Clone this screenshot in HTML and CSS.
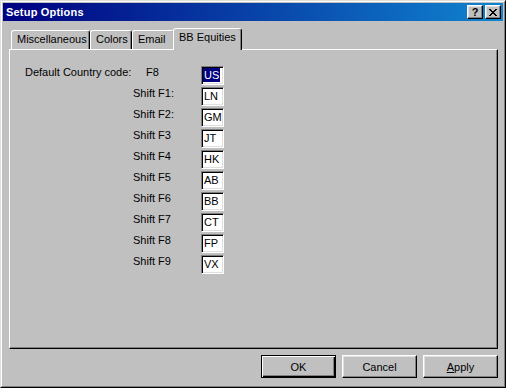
FILE: index.html
```html
<!DOCTYPE html>
<html lang="en">
<head>
    <meta charset="UTF-8">
    <meta name="viewport" content="width=device-width, initial-scale=1.0">
    <title>Setup Options</title>
    <link rel="stylesheet" href="styles.css">
</head>
<body>
    <div class="window">
        <div class="frame">
            <div class="titlebar">
                <span class="title">Setup Options</span>
                <div class="caption-btns">
                    <div class="cap-btn">?</div>
                    <div class="cap-btn">
                        <svg width="8" height="7" viewBox="0 0 8 7">
                            <path d="M0 0h2v1h1v1h2V1h1V0h2v1H7v1H6v1H5v1h1v1h1v1h1v1H6V6H5V5H3v1H2v1H0V6h1V5h1V4h1V3H2V2H1V1H0z" fill="#000"/>
                        </svg>
                    </div>
                </div>
            </div>

            <div class="dialog">
                <div class="tabs">
                    <div class="tab tab-misc">Miscellaneous</div>
                    <div class="tab tab-colors">Colors</div>
                    <div class="tab tab-email">Email</div>
                    <div class="tab tab-bb active">BB Equities</div>
                </div>

                <div class="panel">
                    <div class="fields">
                        <span class="label">Default Country code:</span>
                        <span class="key key-default">F8</span>
                        <span class="code selected"><span>US</span></span>

                        <span></span><span class="key">Shift F1:</span><span class="code"><span>LN</span></span>
                        <span></span><span class="key">Shift F2:</span><span class="code"><span>GM</span></span>
                        <span></span><span class="key">Shift F3</span><span class="code"><span>JT</span></span>
                        <span></span><span class="key">Shift F4</span><span class="code"><span>HK</span></span>
                        <span></span><span class="key">Shift F5</span><span class="code"><span>AB</span></span>
                        <span></span><span class="key">Shift F6</span><span class="code"><span>BB</span></span>
                        <span></span><span class="key">Shift F7</span><span class="code"><span>CT</span></span>
                        <span></span><span class="key">Shift F8</span><span class="code"><span>FP</span></span>
                        <span></span><span class="key">Shift F9</span><span class="code"><span>VX</span></span>
                    </div>
                </div>

                <div class="actions">
                    <button class="btn btn-default">OK</button>
                    <button class="btn">Cancel</button>
                    <button class="btn"><u>A</u>pply</button>
                </div>
            </div>
        </div>
    </div>
</body>
</html>
```

FILE: styles.css
```css
* {
    margin: 0;
    padding: 0;
    box-sizing: border-box;
}
body {
    font-family: "Liberation Sans", Arial, sans-serif;
    font-size: 11px;
    color: #000;
    background: #c0c0c0;
}
.window {
    width: 506px;
    height: 388px;
    background: #c0c0c0;
    border: 1px solid;
    border-color: #dfdfdf #000 #000 #dfdfdf;
}
.frame {
    height: 100%;
    padding: 1px;
    border: 1px solid;
    border-color: #fff #808080 #808080 #fff;
    display: flex;
    flex-direction: column;
}

/* title bar */
.titlebar {
    height: 18px;
    padding: 0 2px 0 3px;
    background: linear-gradient(to right, #000080, #1084d0);
    display: flex;
    align-items: center;
    justify-content: space-between;
}
.title {
    color: #fff;
    font-weight: bold;
    font-size: 11px;
    letter-spacing: 0.2px;
}
.caption-btns {
    display: flex;
    gap: 2px;
}
.cap-btn {
    width: 16px;
    height: 14px;
    background: #c0c0c0;
    border: 1px solid;
    border-color: #fff #000 #000 #fff;
    box-shadow: inset -1px -1px #808080, inset 1px 1px #dfdfdf;
    display: flex;
    align-items: center;
    justify-content: center;
    font-weight: bold;
    font-size: 11px;
    line-height: 11px;
}

/* body of dialog */
.dialog {
    flex: 1;
    padding: 7px 5px 0 6px;
    display: flex;
    flex-direction: column;
}
.tabs {
    height: 21px;
    padding-left: 2px;
    display: flex;
    align-items: flex-end;
}
.tab {
    height: 19px;
    padding: 2px 0 0 5px;
    line-height: 13px;
    border: 1px solid;
    border-bottom: none;
    border-color: #fff #000 transparent #fff;
    border-radius: 3px 3px 0 0;
    box-shadow: inset -1px 0 #808080;
    white-space: nowrap;
}
.tab-misc { width: 79px; }
.tab-colors { width: 42px; }
.tab-email { width: 43px; }
.tab-bb { width: 69px; }
.tab.active {
    height: 22px;
    margin: 0 -2px -1px -2px;
    position: relative;
    z-index: 1;
    background: #c0c0c0;
}

.panel {
    height: 300px;
    border: 1px solid;
    border-color: #fff #000 #000 #fff;
    box-shadow: inset -1px -1px #808080;
}
.fields {
    padding: 16px 0 0 15px;
    display: grid;
    grid-template-columns: 108px 68px 23px;
    grid-auto-rows: 19px;
    row-gap: 2px;
}
.label,
.key {
    line-height: 12px;
    align-self: start;
    white-space: nowrap;
}
.key-default {
    padding-left: 13px;
}
.code {
    width: 23px;
    height: 19px;
    background: #fff;
    border: 1px solid;
    border-color: #808080 #fff #fff #808080;
    box-shadow: inset 1px 1px #000, inset -1px -1px #dfdfdf;
    padding: 1px 0 0 1px;
    line-height: 15px;
}
.code span {
    display: inline-block;
    padding: 0 1px;
    line-height: 14px;
}
.code.selected span {
    background: #000080;
    color: #fff;
}

/* buttons */
.actions {
    margin-top: 6px;
    display: flex;
    justify-content: flex-end;
    gap: 6px;
}
.btn {
    width: 75px;
    height: 23px;
    font-family: "Liberation Sans", Arial, sans-serif;
    font-size: 11px;
    color: #000;
    background: #c0c0c0;
    border: 1px solid;
    border-color: #fff #000 #000 #fff;
    box-shadow: inset -1px -1px #808080, inset 1px 1px #dfdfdf;
}
.btn-default {
    border-color: #000;
    box-shadow: inset 1px 1px #fff, inset -1px -1px #000, inset -2px -2px #808080;
}
```
